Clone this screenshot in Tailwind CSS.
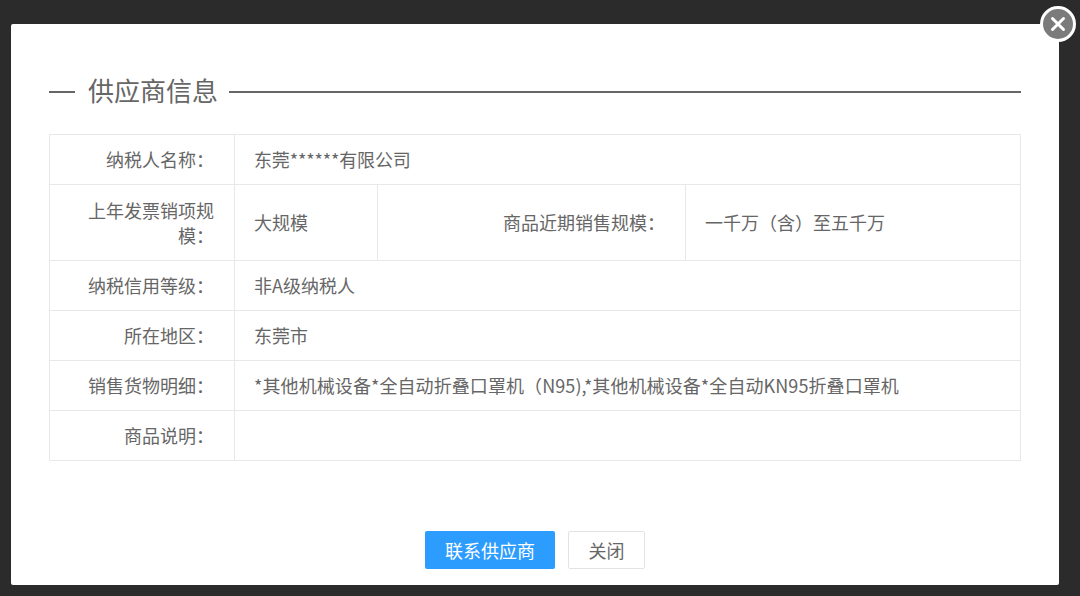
<!DOCTYPE html>
<html lang="zh-CN">

<head>
  <meta charset="UTF-8" />
  <title>供应商信息</title>
  <script src="https://cdn.jsdelivr.net/npm/@tailwindcss/browser@4"></script>
</head>

<body class="bg-[#2b2b2b] h-[596px] overflow-hidden font-['Noto_Sans_CJK_SC','Liberation_Sans',sans-serif]">
  <div class="pt-[24px] pl-[11px]">
    <!-- Modal -->
    <div class="relative w-[1048px] h-[561px] bg-white rounded-[2px] flex flex-col px-[38px]">
      <button class="absolute -top-[18px] -right-[17px] w-[36px] h-[36px] rounded-full bg-[#7b7b7b] border-[3px] border-white flex items-center justify-center">
        <svg width="18" height="18" viewBox="0 0 18 18" fill="none" stroke="#fff" stroke-width="3" stroke-linecap="round">
          <path d="M3.5 3.5 14.5 14.5M14.5 3.5 3.5 14.5" />
        </svg>
      </button>

      <!-- Title -->
      <div class="flex items-center mt-[50px] h-[36px] w-[972px]">
        <div class="w-[26px] h-[2px] bg-[#666]"></div>
        <h2 class="ml-[13px] mr-[11px] text-[26px] leading-[36px] -translate-y-[2px] text-[#666] whitespace-nowrap">供应商信息</h2>
        <div class="flex-1 h-[2px] bg-[#666]"></div>
      </div>

      <!-- Info table -->
      <table class="mt-[24px] w-[972px] table-fixed border-collapse border border-[#e8e8e8] text-[18px] leading-[25px] text-[#666]">
        <colgroup>
          <col class="w-[185px]" />
          <col class="w-[143px]" />
          <col class="w-[308px]" />
          <col />
        </colgroup>
        <tbody>
          <tr class="h-[50px] border-b border-[#e8e8e8]">
            <th class="font-normal text-right pl-[20px] pr-[20px] border-r border-[#e8e8e8]">纳税人名称：</th>
            <td colspan="3" class="px-[19px] tracking-[-0.15px]">东莞******有限公司</td>
          </tr>
          <tr class="h-[76px] border-b border-[#e8e8e8]">
            <th class="font-normal text-right pl-[38px] pr-[20px] border-r border-[#e8e8e8]">上年发票销项规模：</th>
            <td class="px-[19px] border-r border-[#e8e8e8]">大规模</td>
            <th class="font-normal text-right pr-[20px] border-r border-[#e8e8e8]">商品近期销售规模：</th>
            <td class="px-[19px]">一千万（含）至五千万</td>
          </tr>
          <tr class="h-[50px] border-b border-[#e8e8e8]">
            <th class="font-normal text-right pl-[20px] pr-[20px] border-r border-[#e8e8e8]">纳税信用等级：</th>
            <td colspan="3" class="px-[19px]">非A级纳税人</td>
          </tr>
          <tr class="h-[50px] border-b border-[#e8e8e8]">
            <th class="font-normal text-right pl-[20px] pr-[20px] border-r border-[#e8e8e8]">所在地区：</th>
            <td colspan="3" class="px-[19px]">东莞市</td>
          </tr>
          <tr class="h-[50px] border-b border-[#e8e8e8]">
            <th class="font-normal text-right pl-[20px] pr-[20px] border-r border-[#e8e8e8]">销售货物明细：</th>
            <td colspan="3" class="px-[19px] whitespace-nowrap tracking-[0.08px]">*其他机械设备*全自动折叠口罩机（N95),*其他机械设备*全自动KN95折叠口罩机</td>
          </tr>
          <tr class="h-[50px]">
            <th class="font-normal text-right pl-[20px] pr-[20px] border-r border-[#e8e8e8]">商品说明：</th>
            <td colspan="3" class="px-[19px]"></td>
          </tr>
        </tbody>
      </table>

      <!-- Buttons -->
      <div class="mt-auto mb-[16px] flex justify-center gap-[13px] text-[18px]">
        <button class="w-[130px] h-[38px] rounded-[2px] bg-[#2d9cff] text-white">联系供应商</button>
        <button class="w-[77px] h-[38px] rounded-[2px] bg-white border border-[#e3e3e3] text-[#666]">关闭</button>
      </div>
    </div>
  </div>
</body>

</html>
